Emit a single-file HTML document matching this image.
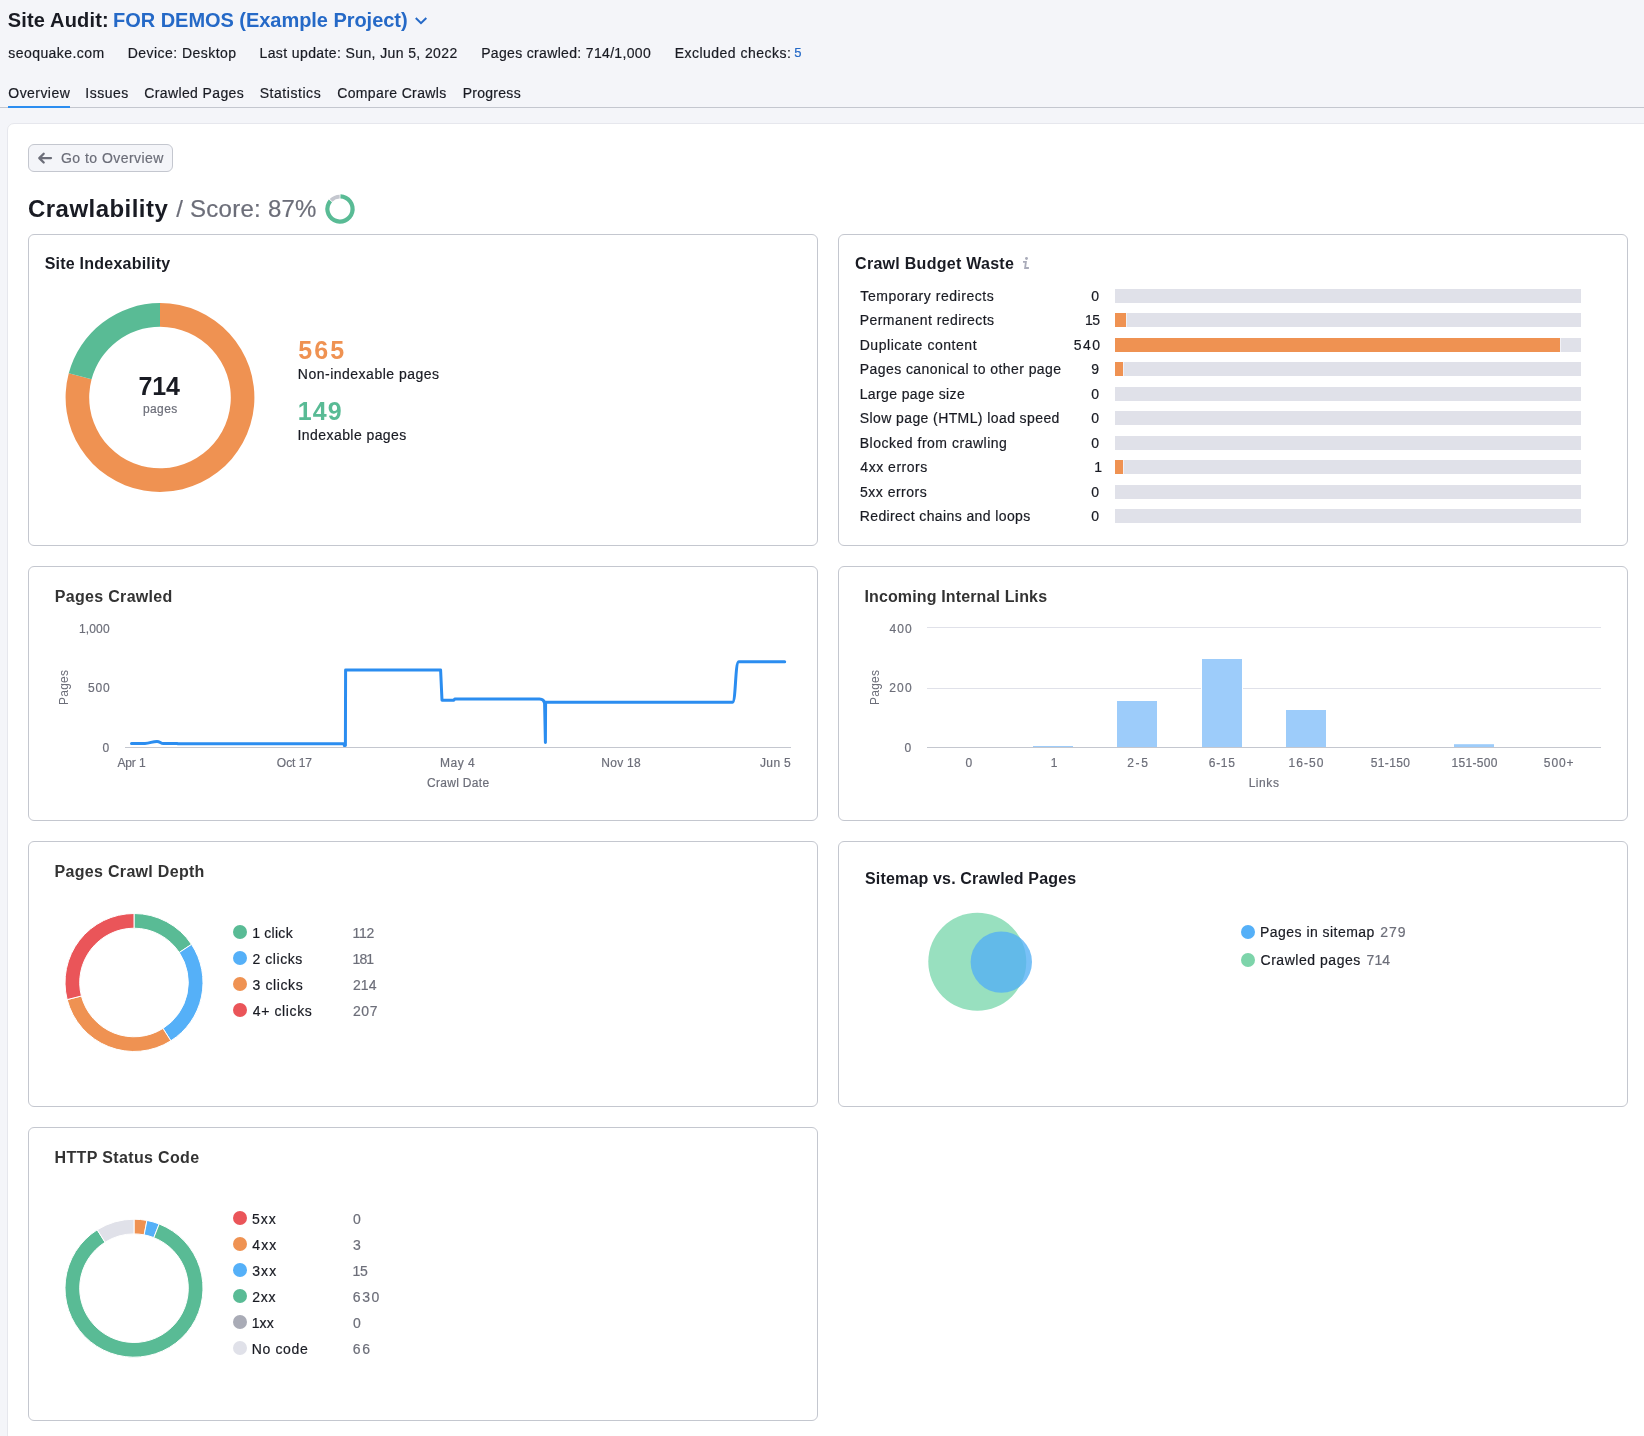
<!DOCTYPE html>
<html lang="en"><head><meta charset="utf-8"><title>Site Audit: Crawlability</title>
<style>
*{box-sizing:border-box;margin:0;padding:0}
html,body{width:1644px;height:1436px;overflow:hidden}
body{background:#f4f5f9;font-family:"Liberation Sans",sans-serif;color:#191b23;position:relative}
.t{position:absolute;white-space:nowrap;font-size:14px;line-height:14px;-webkit-text-stroke:0.2px currentColor}
.b{font-weight:700;-webkit-text-stroke:0}
.abs{position:absolute}
.card{position:absolute;background:#fff;border:1px solid #c4c7cf;border-radius:6px;width:790px}
.panel{position:absolute;left:7px;top:123px;width:1660px;height:1340px;background:#fff;border:1px solid #e6e7ed;border-radius:7px}
.bar{position:absolute;left:1115px;width:466px;height:14px;background:#e0e1e9}
.bar i{position:absolute;left:0;top:0;height:14px;background:#ef9252;display:block;box-sizing:content-box;border-right:1px solid #f1f1f6}
.dot{position:absolute;width:14px;height:14px;border-radius:50%}
svg{position:absolute;left:0;top:0;overflow:visible}
.rot{position:absolute;white-space:nowrap;font-size:12px;line-height:12px;color:#6c6e79;transform:rotate(-90deg);transform-origin:0 0}
</style></head><body>

<div class="abs" style="left:0;top:107px;width:1644px;height:1px;background:#c4c7cf"></div>
<div class="abs" style="left:8px;top:106px;width:62px;height:2px;background:#2b8df0"></div>
<div class="panel"></div>
<div class="abs" style="left:28px;top:144px;width:145px;height:28px;border:1px solid #c4c7cf;border-radius:6px;background:#f4f5f9"></div>
<div class="card" style="left:28px;top:234px;height:312px"></div>
<div class="card" style="left:838px;top:234px;height:312px"></div>
<div class="card" style="left:28px;top:566px;height:255px"></div>
<div class="card" style="left:838px;top:566px;height:255px"></div>
<div class="card" style="left:28px;top:841px;height:266px"></div>
<div class="card" style="left:838px;top:841px;height:266px"></div>
<div class="card" style="left:28px;top:1127px;height:294px"></div>
<div class="bar" style="top:289.0px"></div>
<div class="bar" style="top:313.0px"><i style="width:11px"></i></div>
<div class="bar" style="top:338.0px"><i style="width:445px"></i></div>
<div class="bar" style="top:362.0px"><i style="width:8px"></i></div>
<div class="bar" style="top:387.0px"></div>
<div class="bar" style="top:411.0px"></div>
<div class="bar" style="top:436.0px"></div>
<div class="bar" style="top:460.0px"><i style="width:8px"></i></div>
<div class="bar" style="top:485.0px"></div>
<div class="bar" style="top:509.0px"></div>
<div class="dot" style="left:233px;top:925px;background:#59bb95"></div>
<div class="dot" style="left:233px;top:951px;background:#55b0f8"></div>
<div class="dot" style="left:233px;top:977px;background:#ef9252"></div>
<div class="dot" style="left:233px;top:1003px;background:#ea5559"></div>
<div class="dot" style="left:233px;top:1211px;background:#ea5559"></div>
<div class="dot" style="left:233px;top:1237px;background:#ef9252"></div>
<div class="dot" style="left:233px;top:1263px;background:#55b0f8"></div>
<div class="dot" style="left:233px;top:1289px;background:#59bb95"></div>
<div class="dot" style="left:233px;top:1315px;background:#a9abb6"></div>
<div class="dot" style="left:233px;top:1341px;background:#e0e1e9"></div>
<div class="dot" style="left:1241px;top:925px;background:#55b0f8"></div>
<div class="dot" style="left:1241px;top:953px;background:#7dd4aa"></div>
<svg width="1644" height="1436" viewBox="0 0 1644 1436">
<path d="M416.5,18.7L421,23.2L425.6,18.7" fill="none" stroke="#2569c7" stroke-width="2" stroke-linecap="square" stroke-linejoin="miter"/>
<path d="M51,158.1H39.4M43.7,153.7L39.3,158.1L43.7,162.5" fill="none" stroke="#6c6e79" stroke-width="2.3" stroke-linecap="round" stroke-linejoin="round"/>
<path d="M340.51,194.31A14.7,14.7 0 1 1 328.82,199.45L332.02,202.18A10.5,10.5 0 1 0 340.37,198.51Z" fill="#59bb95"/>
<path d="M329.71,199.07A14.3,14.3 0 0 1 339.63,194.70L339.72,198.40A10.6,10.6 0 0 0 332.37,201.64Z" fill="#c4c7cf"/>
<path d="M1023,261.9H1025.9L1025.1,268H1028.9" fill="none" stroke="#a9abb9" stroke-width="1.8" stroke-linejoin="miter"/><circle cx="1026.5" cy="258.5" r="1.45" fill="#a9abb9"/>
<path d="M160.00,303.10A94.4,94.4 0 1 1 68.76,373.27L91.57,379.33A70.8,70.8 0 1 0 160.00,326.70Z" fill="#ef9252"/>
<path d="M68.76,373.27A94.4,94.4 0 0 1 160.00,303.10L160.00,326.70A70.8,70.8 0 0 0 91.57,379.33Z" fill="#59bb95"/>
<path d="M125,747.5H791" stroke="#c4c7cf" stroke-width="1" fill="none"/>
<path d="M131.5,743.4H145C150,743.4 152,741.4 157,741.4C160,741.4 160.5,743.4 163.5,743.5H177L178,743.7H344.3V745.6L345.4,745.6L345.6,670H440.6L442,700.3H453.5L455,698.9H539.5Q544,699 544.6,703.5L545.4,742.5L545.6,702.2H732.5C736,702 735,662 738.8,661.8H784.7" fill="none" stroke="#2b8df0" stroke-width="3" stroke-linecap="round" stroke-linejoin="round"/>
<path d="M927,627.5H1601" stroke="#e0e1e9" stroke-width="1" fill="none"/>
<path d="M927,688.5H1601" stroke="#e0e1e9" stroke-width="1" fill="none"/>
<path d="M927,747.5H1601" stroke="#c4c7cf" stroke-width="1" fill="none"/>
<rect x="1033" y="746" width="40" height="1.0" fill="#9dccfa"/>
<rect x="1116" y="700" width="42" height="47.0" fill="#fff"/>
<rect x="1117" y="701" width="40" height="46.0" fill="#9dccfa"/>
<rect x="1201" y="658" width="42" height="89.0" fill="#fff"/>
<rect x="1202" y="659" width="40" height="88.0" fill="#9dccfa"/>
<rect x="1285" y="709" width="42" height="38.0" fill="#fff"/>
<rect x="1286" y="710" width="40" height="37.0" fill="#9dccfa"/>
<rect x="1454" y="744.2" width="40" height="2.8" fill="#9dccfa"/>
<path d="M134.00,913.50A69,69 0 0 1 191.52,944.39L179.26,952.51A54.3,54.3 0 0 0 134.00,928.20Z" fill="#59bb95" stroke="#fff" stroke-width="1"/>
<path d="M191.52,944.39A69,69 0 0 1 170.84,1040.84L162.99,1028.41A54.3,54.3 0 0 0 179.26,952.51Z" fill="#55b0f8" stroke="#fff" stroke-width="1"/>
<path d="M170.84,1040.84A69,69 0 0 1 67.16,999.62L81.40,995.98A54.3,54.3 0 0 0 162.99,1028.41Z" fill="#ef9252" stroke="#fff" stroke-width="1"/>
<path d="M67.16,999.62A69,69 0 0 1 134.00,913.50L134.00,928.20A54.3,54.3 0 0 0 81.40,995.98Z" fill="#ea5559" stroke="#fff" stroke-width="1"/>
<path d="M134.00,1219.20A69,69 0 0 1 146.93,1220.42L144.17,1234.86A54.3,54.3 0 0 0 134.00,1233.90Z" fill="#ef9252" stroke="#fff" stroke-width="1"/>
<path d="M146.93,1220.42A69,69 0 0 1 159.18,1223.96L153.81,1237.64A54.3,54.3 0 0 0 144.17,1234.86Z" fill="#55b0f8" stroke="#fff" stroke-width="1"/>
<path d="M159.18,1223.96A69,69 0 1 1 97.23,1229.81L105.06,1242.25A54.3,54.3 0 1 0 153.81,1237.64Z" fill="#59bb95" stroke="#fff" stroke-width="1"/>
<path d="M97.23,1229.81A69,69 0 0 1 134.00,1219.20L134.00,1233.90A54.3,54.3 0 0 0 105.06,1242.25Z" fill="#e0e1e9" stroke="#fff" stroke-width="1"/>
<circle cx="977.3" cy="961.8" r="49" fill="#98e0bf"/>
<circle cx="1001.3" cy="962.1" r="30.7" fill="#53aff5" fill-opacity="0.78"/>
</svg>
<div class="abs" style="left:0;top:0;width:1644px;height:1436px;will-change:transform">
<span class="t b" style="left:7.82px;top:10px;font-size:20px;line-height:20px;letter-spacing:0.163px;">Site Audit:</span>
<span class="t b" style="left:113.10px;top:10px;font-size:20px;line-height:20px;letter-spacing:-0.044px;color:#2569c7;">FOR DEMOS (Example Project)</span>
<span class="t" style="left:8.37px;top:46px;letter-spacing:0.423px;">seoquake.com</span>
<span class="t" style="left:127.76px;top:46px;letter-spacing:0.452px;">Device: Desktop</span>
<span class="t" style="left:259.53px;top:46px;letter-spacing:0.390px;">Last update: Sun, Jun 5, 2022</span>
<span class="t" style="left:481.21px;top:46px;letter-spacing:0.331px;">Pages crawled: 714/1,000</span>
<span class="t" style="left:674.69px;top:46px;letter-spacing:0.476px;">Excluded checks:</span>
<span class="t" style="left:794.19px;top:46px;font-size:13px;line-height:13px;color:#2569c7;">5</span>
<span class="t" style="left:8.35px;top:86px;letter-spacing:0.437px;">Overview</span>
<span class="t" style="left:85.32px;top:86px;letter-spacing:0.500px;">Issues</span>
<span class="t" style="left:144.21px;top:86px;letter-spacing:0.383px;">Crawled Pages</span>
<span class="t" style="left:259.67px;top:86px;letter-spacing:0.552px;">Statistics</span>
<span class="t" style="left:337.21px;top:86px;letter-spacing:0.371px;">Compare Crawls</span>
<span class="t" style="left:462.69px;top:86px;letter-spacing:0.277px;">Progress</span>
<span class="t" style="left:61.02px;top:151px;letter-spacing:0.458px;color:#6c6e79;">Go to Overview</span>
<span class="t b" style="left:28.04px;top:197px;font-size:24px;line-height:24px;letter-spacing:0.458px;">Crawlability</span>
<span class="t" style="left:176.22px;top:197px;font-size:24px;line-height:24px;letter-spacing:0.257px;color:#6c6e79;">/ Score: 87%</span>
<span class="t b" style="left:44.63px;top:256px;font-size:16px;line-height:16px;letter-spacing:0.231px;">Site Indexability</span>
<span class="t b" style="left:138.55px;top:374px;font-size:25px;line-height:25px;letter-spacing:-0.199px;">714</span>
<span class="t" style="left:142.89px;top:403px;font-size:12px;line-height:12px;letter-spacing:0.411px;color:#6c6e79;">pages</span>
<span class="t b" style="left:298.32px;top:338px;font-size:25px;line-height:25px;letter-spacing:2.108px;color:#ef9252;">565</span>
<span class="t" style="left:297.87px;top:367px;letter-spacing:0.494px;">Non-indexable pages</span>
<span class="t b" style="left:297.84px;top:399px;font-size:25px;line-height:25px;letter-spacing:1.098px;color:#59bb95;">149</span>
<span class="t" style="left:297.56px;top:428px;letter-spacing:0.426px;">Indexable pages</span>
<span class="t b" style="left:855.11px;top:256px;font-size:16px;line-height:16px;letter-spacing:0.273px;">Crawl Budget Waste</span>
<span class="t" style="left:860.37px;top:289px;letter-spacing:0.534px;">Temporary redirects</span>
<span class="t" style="left:1091.36px;top:289px;">0</span>
<span class="t" style="left:859.69px;top:313px;letter-spacing:0.461px;">Permanent redirects</span>
<span class="t" style="left:1084.89px;top:313px;letter-spacing:-0.473px;">15</span>
<span class="t" style="left:859.69px;top:338px;letter-spacing:0.544px;">Duplicate content</span>
<span class="t" style="left:1073.78px;top:338px;letter-spacing:1.397px;">540</span>
<span class="t" style="left:859.69px;top:362px;letter-spacing:0.438px;">Pages canonical to other page</span>
<span class="t" style="left:1091.26px;top:362px;">9</span>
<span class="t" style="left:859.69px;top:387px;letter-spacing:0.386px;">Large page size</span>
<span class="t" style="left:1091.36px;top:387px;">0</span>
<span class="t" style="left:859.74px;top:411px;letter-spacing:0.406px;">Slow page (HTML) load speed</span>
<span class="t" style="left:1091.36px;top:411px;">0</span>
<span class="t" style="left:859.67px;top:436px;letter-spacing:0.515px;">Blocked from crawling</span>
<span class="t" style="left:1091.36px;top:436px;">0</span>
<span class="t" style="left:860.35px;top:460px;letter-spacing:0.522px;">4xx errors</span>
<span class="t" style="left:1094.13px;top:460px;">1</span>
<span class="t" style="left:859.96px;top:485px;letter-spacing:0.501px;">5xx errors</span>
<span class="t" style="left:1091.36px;top:485px;">0</span>
<span class="t" style="left:859.69px;top:509px;letter-spacing:0.396px;">Redirect chains and loops</span>
<span class="t" style="left:1091.36px;top:509px;">0</span>
<span class="t b" style="left:54.87px;top:589px;font-size:16px;line-height:16px;letter-spacing:0.300px;color:#333333;">Pages Crawled</span>
<span class="t" style="left:79.06px;top:623px;font-size:12px;line-height:12px;letter-spacing:0.130px;color:#6c6e79;">1,000</span>
<span class="t" style="left:88.03px;top:682px;font-size:12px;line-height:12px;letter-spacing:0.764px;color:#6c6e79;">500</span>
<span class="t" style="left:102.52px;top:742px;font-size:12px;line-height:12px;color:#6c6e79;">0</span>
<span class="t" style="left:117.40px;top:757px;font-size:12px;line-height:12px;letter-spacing:-0.128px;color:#6c6e79;">Apr 1</span>
<span class="t" style="left:276.87px;top:757px;font-size:12px;line-height:12px;letter-spacing:-0.039px;color:#6c6e79;">Oct 17</span>
<span class="t" style="left:440.06px;top:757px;font-size:12px;line-height:12px;letter-spacing:0.482px;color:#6c6e79;">May 4</span>
<span class="t" style="left:601.26px;top:757px;font-size:12px;line-height:12px;letter-spacing:0.273px;color:#6c6e79;">Nov 18</span>
<span class="t" style="left:760.03px;top:757px;font-size:12px;line-height:12px;letter-spacing:0.345px;color:#6c6e79;">Jun 5</span>
<span class="t" style="left:426.97px;top:777px;font-size:12px;line-height:12px;letter-spacing:0.308px;color:#6c6e79;">Crawl Date</span>
<span class="t b" style="left:864.43px;top:589px;font-size:16px;line-height:16px;letter-spacing:0.138px;color:#333333;">Incoming Internal Links</span>
<span class="t" style="left:889.57px;top:623px;font-size:12px;line-height:12px;letter-spacing:0.993px;color:#6c6e79;">400</span>
<span class="t" style="left:889.17px;top:682px;font-size:12px;line-height:12px;letter-spacing:1.193px;color:#6c6e79;">200</span>
<span class="t" style="left:904.57px;top:742px;font-size:12px;line-height:12px;color:#6c6e79;">0</span>
<span class="t" style="left:965.59px;top:757px;font-size:12px;line-height:12px;color:#6c6e79;">0</span>
<span class="t" style="left:1050.86px;top:757px;font-size:12px;line-height:12px;color:#6c6e79;">1</span>
<span class="t" style="left:1127.34px;top:757px;font-size:12px;line-height:12px;letter-spacing:1.579px;color:#6c6e79;">2-5</span>
<span class="t" style="left:1208.76px;top:757px;font-size:12px;line-height:12px;letter-spacing:0.708px;color:#6c6e79;">6-15</span>
<span class="t" style="left:1288.48px;top:757px;font-size:12px;line-height:12px;letter-spacing:1.090px;color:#6c6e79;">16-50</span>
<span class="t" style="left:1370.68px;top:757px;font-size:12px;line-height:12px;letter-spacing:0.391px;color:#6c6e79;">51-150</span>
<span class="t" style="left:1451.48px;top:757px;font-size:12px;line-height:12px;letter-spacing:0.335px;color:#6c6e79;">151-500</span>
<span class="t" style="left:1543.86px;top:757px;font-size:12px;line-height:12px;letter-spacing:0.855px;color:#6c6e79;">500+</span>
<span class="t" style="left:1248.63px;top:777px;font-size:12px;line-height:12px;letter-spacing:0.567px;color:#6c6e79;">Links</span>
<span class="t b" style="left:54.60px;top:864px;font-size:16px;line-height:16px;letter-spacing:0.302px;color:#333333;">Pages Crawl Depth</span>
<span class="t" style="left:252.13px;top:926px;letter-spacing:0.269px;">1 click</span>
<span class="t" style="left:352.60px;top:926px;letter-spacing:-0.328px;color:#6c6e79;">112</span>
<span class="t" style="left:252.51px;top:952px;letter-spacing:0.554px;">2 clicks</span>
<span class="t" style="left:352.60px;top:952px;letter-spacing:-0.912px;color:#6c6e79;">181</span>
<span class="t" style="left:252.54px;top:978px;letter-spacing:0.606px;">3 clicks</span>
<span class="t" style="left:352.90px;top:978px;letter-spacing:0.152px;color:#6c6e79;">214</span>
<span class="t" style="left:252.86px;top:1004px;letter-spacing:0.602px;">4+ clicks</span>
<span class="t" style="left:352.90px;top:1004px;letter-spacing:0.624px;color:#6c6e79;">207</span>
<span class="t b" style="left:865.01px;top:871px;font-size:16px;line-height:16px;letter-spacing:0.165px;">Sitemap vs. Crawled Pages</span>
<span class="t" style="left:1260.09px;top:925px;letter-spacing:0.454px;">Pages in sitemap</span>
<span class="t" style="left:1380.36px;top:925px;letter-spacing:0.880px;color:#6c6e79;">279</span>
<span class="t" style="left:1260.51px;top:953px;letter-spacing:0.533px;">Crawled pages</span>
<span class="t" style="left:1366.60px;top:953px;letter-spacing:0.064px;color:#6c6e79;">714</span>
<span class="t b" style="left:54.60px;top:1150px;font-size:16px;line-height:16px;letter-spacing:0.351px;color:#333333;">HTTP Status Code</span>
<span class="t" style="left:251.96px;top:1212px;letter-spacing:0.970px;">5xx</span>
<span class="t" style="left:352.90px;top:1212px;color:#6c6e79;">0</span>
<span class="t" style="left:252.35px;top:1238px;letter-spacing:1.041px;">4xx</span>
<span class="t" style="left:352.96px;top:1238px;color:#6c6e79;">3</span>
<span class="t" style="left:252.14px;top:1264px;letter-spacing:1.144px;">3xx</span>
<span class="t" style="left:352.45px;top:1264px;letter-spacing:-0.292px;color:#6c6e79;">15</span>
<span class="t" style="left:252.27px;top:1290px;letter-spacing:0.746px;">2xx</span>
<span class="t" style="left:352.66px;top:1290px;letter-spacing:1.689px;color:#6c6e79;">630</span>
<span class="t" style="left:251.68px;top:1316px;letter-spacing:0.098px;">1xx</span>
<span class="t" style="left:352.90px;top:1316px;color:#6c6e79;">0</span>
<span class="t" style="left:251.69px;top:1342px;letter-spacing:0.647px;">No code</span>
<span class="t" style="left:352.66px;top:1342px;letter-spacing:1.876px;color:#6c6e79;">66</span>
<span class="rot" style="left:58.4px;top:704.5px;letter-spacing:0.25px">Pages</span>
<span class="rot" style="left:868.9px;top:704.5px;letter-spacing:0.25px">Pages</span>
</div>
</body></html>
